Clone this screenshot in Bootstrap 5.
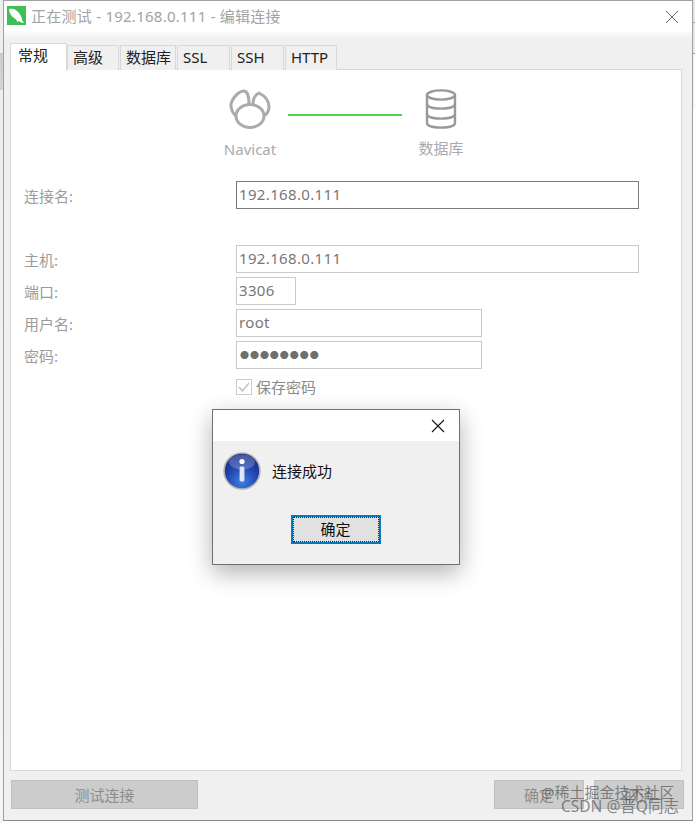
<!DOCTYPE html>
<html lang="zh">
<head>
<meta charset="utf-8">
<link href="https://cdn.jsdelivr.net/npm/bootstrap@5.3.0/dist/css/bootstrap.min.css" rel="stylesheet">
<style>
html,body{height:100%;margin:0;background:#fff;overflow:hidden}
body{font-family:"Noto Sans","Noto Sans CJK SC",sans-serif;font-size:15px;color:#777}
.backdrop{width:695px;height:823px;background:#fff;padding:0 2px 2px 3px;position:relative}
.win{height:821px;width:690px;background:#f0f0f0;border:1px solid #a0a0a0;border-bottom-color:#8a8a8a;display:flex;flex-direction:column;padding:0 8px 0 6px}
.tbar{height:42px;margin:0 -8px 0 -6px;padding:5px 13px 0 3px;background:linear-gradient(#fff 0,#fff 29px,#f0f0f0 38px);display:flex;align-items:flex-start;gap:5px;color:#a2a2a2;font-size:15px;line-height:20px;flex:none}
.tbar svg{flex:none}
.tt{flex:1;letter-spacing:.25px;white-space:nowrap}
.tabbar.nav{height:26px;border:0;flex:none;align-items:flex-end;margin-bottom:0;gap:1px;position:relative;z-index:1}
.tabbar .nav-item{height:25px}
.tabbar .nav-link{height:25px;padding:0 0 0 5px;border:1px solid #d9d9d9;border-bottom:0;border-radius:0;background:#f0f0f0;color:#222;font-size:15px;line-height:22px;margin:0;text-align:left;display:block}
.tab1{width:57px}.tab2{width:52px}.tab3{width:56px}.tab4,.tab5{width:53px}.tab6{width:52px}
.tabbar .nav-item.sel{height:28px;margin-bottom:-1px;margin-right:-1px}
.tabbar .nav-item.sel .nav-link{height:28px;background:#fff;color:#222;line-height:22px;border-color:#d9d9d9;padding-left:7px}
.pane{height:702px;width:672px;background:#fff;border:1px solid #d9d9d9;flex:none;padding-top:19px;position:relative}
.flow{display:flex;justify-content:flex-start;align-items:flex-start;height:92px;margin-left:191px;line-height:20px;color:#aaa}
.node{width:96px;display:flex;flex-direction:column;align-items:center;gap:9px;font-size:15px}
.node svg{display:block}
.wire{width:114px;height:2px;background:#4fd04f;margin:25px 0 0 -10px;flex:none}
.node2{margin-left:-9px}
.rows{display:grid;grid-template-columns:212px auto;row-gap:4px;padding-left:13px;justify-items:start;align-items:center}
.lab{color:#9b9b9b;font-size:15px;line-height:20px;padding-top:1px;white-space:nowrap}
.rows .form-control{height:28px;padding:0 2px 2px;font-size:15px;line-height:24px;border:1px solid #c9c9c9;border-radius:0;color:#777;background:#fff;box-shadow:none;font-family:inherit;letter-spacing:.35px}
.rows .first{border-color:#7a7a7a;width:403px;margin-bottom:32px}
.labfirst{margin-bottom:32px}
.w-long{width:403px}.w-port{width:60px}.w-mid{width:246px}
.rows .pw{font-size:9px;letter-spacing:.95px;color:#6f6f6f;padding:0 0 0 3px;line-height:26px}
.chk{grid-column:2;display:flex;align-items:center;gap:4px;margin:4px 0 0;color:#8a8a8a;font-size:15px;line-height:20px}
.box{width:16px;height:16px;border:1px solid #ccc;background:#fff;display:flex;flex:none}
.foot{flex:1;display:flex;justify-content:space-between;padding:9px 0 0 1px}
.right-btns{display:flex;gap:10px}
.gbtn.btn{height:29px;background:#ccc;border:1px solid #c0c0c0;border-radius:0;color:#8c8c8c;font-size:15px;line-height:26px;padding:0}
.btn-test{width:187px}.btn-ok{width:90px}
.dlg{position:absolute;left:212px;top:409px;width:248px;height:156px;background:#f0f0f0;border:1px solid #6f6f6f;box-shadow:0 8px 22px rgba(0,0,0,.3);display:flex;flex-direction:column}
.dhead{height:31px;background:#fff;display:flex;justify-content:flex-end;align-items:center;padding-right:14px;flex:none}
.dbody{display:flex;align-items:center;gap:11px;padding:11px 0 0 10px;color:#111;font-size:15px;line-height:20px}
.dfoot{display:flex;justify-content:center;margin-top:25px;padding-right:1px}
.okb.btn{width:90px;height:29px;padding:0;border-radius:0;border:2px solid #0a78b8;background:#e1e1e1;color:#111;font-size:15px;line-height:23px;outline:1px dotted #222;outline-offset:-3px}
.mark1{position:absolute;left:541px;top:782px;color:rgba(80,80,80,.68);font-size:15px;line-height:20px;white-space:nowrap}
.mark2{position:absolute;left:561px;top:796px;color:rgba(80,80,80,.68);font-size:15.5px;line-height:20px;white-space:nowrap}
.crumb{position:absolute;left:0;top:0;width:3px;height:823px;background:linear-gradient(#eee 0,#eee 53px,#ccc 53px,#d4d4d4 90px,#eee 90px,#f4f4f4 100%)}
.crumb2{position:absolute;right:0;top:0;width:2px;height:110px;background:linear-gradient(#e8e8e8 0,#e8e8e8 22px,#999 22px,#999 23px,#e8e8e8 23px,#e8e8e8 53px,#999 53px,#999 54px,#f4f4f4 54px)}
</style>
</head>
<body>
<div class="backdrop">
  <div class="crumb"></div>
  <div class="crumb2"></div>
  <div class="win">
    <div class="tbar">
      <svg width="19" height="19" viewBox="0 0 19 19"><rect width="19" height="19" fill="#3fbf55"/><path d="M2 3c3-1 7 0 9 3 2 2 4 5 4 8l2 3c-2 0-4-1-5-2l-2 1c0-2-1-3-3-4C4 10 2 6 2 3z" fill="#fff"/></svg>
      <span class="tt">正在测试 - 192.168.0.111 - 编辑连接</span>
      <svg class="mt-1" width="14" height="14" viewBox="0 0 14 14"><path d="M1 1l12 12M13 1L1 13" stroke="#666" stroke-width="1" fill="none"/></svg>
    </div>
    <ul class="nav nav-tabs tabbar">
      <li class="nav-item sel tab1"><a class="nav-link active" href="#">常规</a></li>
      <li class="nav-item tab2"><a class="nav-link" href="#">高级</a></li>
      <li class="nav-item tab3"><a class="nav-link" href="#">数据库</a></li>
      <li class="nav-item tab4"><a class="nav-link" href="#">SSL</a></li>
      <li class="nav-item tab5"><a class="nav-link" href="#">SSH</a></li>
      <li class="nav-item tab6"><a class="nav-link" href="#">HTTP</a></li>
    </ul>
    <div class="pane">
      <div class="flow">
        <div class="node">
          <svg width="42" height="41" viewBox="0 0 42 41" fill="none" stroke="#ababab" stroke-width="3"><ellipse cx="21" cy="27" rx="14" ry="11.5"/><path d="M7 27C2 23 1 16 3 12 6 6 11 2 15 2c3 0 5 5 5 13"/><path d="M24 15c0-5 2-9 6-11 6 3 10 8 10 14 0 4-2 7-5 9"/></svg>
          <span>Navicat</span>
        </div>
        <div class="wire"></div>
        <div class="node node2">
          <svg width="32" height="40" viewBox="0 0 32 40" fill="none" stroke="#999" stroke-width="2.4"><ellipse cx="16" cy="6" rx="14" ry="4.6"/><path d="M2 6v28c0 3 6 4.6 14 4.6S30 37 30 34V6"/><path d="M2 15c0 3 6 4.6 14 4.6S30 18 30 15"/><path d="M2 25c0 3 6 4.6 14 4.6S30 28 30 25"/></svg>
          <span>数据库</span>
        </div>
      </div>
      <div class="rows">
        <label class="lab labfirst">连接名:</label><input class="form-control first" value="192.168.0.111">
        <label class="lab">主机:</label><input class="form-control w-long" value="192.168.0.111">
        <label class="lab">端口:</label><input class="form-control w-port" value="3306">
        <label class="lab">用户名:</label><input class="form-control w-mid" value="root">
        <label class="lab">密码:</label><div class="form-control w-mid pw">●●●●●●●●</div>
        <div class="chk"><span class="box"><svg width="14" height="14" viewBox="0 0 14 14" fill="none"><path d="M2 7l3.5 4L12 3" stroke="#bbb" stroke-width="1.2"/></svg></span><span>保存密码</span></div>
      </div>
    </div>
    <div class="foot">
      <button class="btn gbtn btn-test" type="button">测试连接</button>
      <div class="right-btns">
        <button class="btn gbtn btn-ok" type="button">确定</button>
        <button class="btn gbtn btn-ok" type="button">取消</button>
      </div>
    </div>
  </div>
  <div class="dlg">
    <div class="dhead"><svg width="14" height="14" viewBox="0 0 14 14"><path d="M1 1l12 12M13 1L1 13" stroke="#111" stroke-width="1.1" fill="none"/></svg></div>
    <div class="dbody">
      <svg width="38" height="38" viewBox="0 0 38 38"><defs><radialGradient id="bl" cx=".5" cy=".8" r=".8"><stop offset="0" stop-color="#3f7fe0"/><stop offset=".6" stop-color="#1f3fa8"/><stop offset="1" stop-color="#16287c"/></radialGradient></defs><circle cx="19" cy="19" r="18" fill="url(#bl)" stroke="#b5b5b5" stroke-width="1.6"/><ellipse cx="19" cy="10" rx="13" ry="7.5" fill="#fff" opacity=".22"/><circle cx="19" cy="9.5" r="2.6" fill="#fff"/><rect x="16.6" y="14.5" width="4.8" height="15" rx="1.4" fill="#dfe6f4"/></svg>
      <span>连接成功</span>
    </div>
    <div class="dfoot"><button class="btn okb" type="button">确定</button></div>
  </div>
  <div class="mark1">@稀土掘金技术社区</div>
  <div class="mark2">CSDN @晋Q同志</div>
</div>
</body>
</html>
